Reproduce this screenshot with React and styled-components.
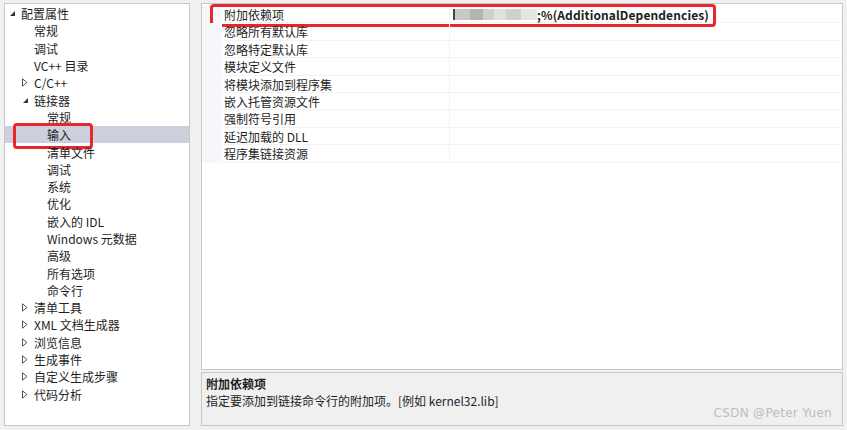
import styled, { createGlobalStyle } from 'styled-components';

const GlobalStyle = createGlobalStyle`
   html, body {
      margin: 0;
      padding: 0;
      background: #f0f0f0;
   }
   body {
      font-family: "Noto Sans CJK SC", "Noto Sans", sans-serif;
      font-size: 12px;
      color: #1e1e1e;
   }
`;

const tree = [
   { label: '配置属性', level: 0, arrow: 'open' },
   { label: '常规', level: 1 },
   { label: '调试', level: 1 },
   { label: 'VC++ 目录', level: 1 },
   { label: 'C/C++', level: 1, arrow: 'closed' },
   { label: '链接器', level: 1, arrow: 'open' },
   { label: '常规', level: 2 },
   { label: '输入', level: 2, selected: true },
   { label: '清单文件', level: 2 },
   { label: '调试', level: 2 },
   { label: '系统', level: 2 },
   { label: '优化', level: 2 },
   { label: '嵌入的 IDL', level: 2 },
   { label: 'Windows 元数据', level: 2 },
   { label: '高级', level: 2 },
   { label: '所有选项', level: 2 },
   { label: '命令行', level: 2 },
   { label: '清单工具', level: 1, arrow: 'closed' },
   { label: 'XML 文档生成器', level: 1, arrow: 'closed' },
   { label: '浏览信息', level: 1, arrow: 'closed' },
   { label: '生成事件', level: 1, arrow: 'closed' },
   { label: '自定义生成步骤', level: 1, arrow: 'closed' },
   { label: '代码分析', level: 1, arrow: 'closed' },
];

const props = [
   '附加依赖项',
   '忽略所有默认库',
   '忽略特定默认库',
   '模块定义文件',
   '将模块添加到程序集',
   '嵌入托管资源文件',
   '强制符号引用',
   '延迟加载的 DLL',
   '程序集链接资源',
];

const Arrow = ({ type }) => (
   type === 'open'
      ? <svg width="7" height="7" viewBox="0 0 7 7"><path d="M6 1 L6 6 L1 6 Z" fill="#333" /></svg>
      : <svg width="6" height="9" viewBox="0 0 6 9"><path d="M0.5 0.8 L5 4.5 L0.5 8.2 Z" fill="none" stroke="#555" strokeWidth="1" /></svg>
);

const App = () => {
   return (
      <>
         <GlobalStyle />
         <Page>
            <TreePanel>
               {
                  tree.map((item, i) => (
                     <TreeRow key={i} $selected={item.selected}>
                        <ArrowSlot $level={item.level}>
                           { item.arrow && <Arrow type={item.arrow} /> }
                        </ArrowSlot>
                        <span>{ item.label }</span>
                        { item.selected && <Highlight /> }
                     </TreeRow>
                  ))
               }
            </TreePanel>
            <RightColumn>
               <Grid>
                  {
                     props.map((name, i) => (
                        <PropRow key={i}>
                           <Gutter />
                           <PropName>{ name }</PropName>
                           <PropValue>
                              {
                                 i === 0 &&
                                 <>
                                    <Blur />
                                    <ValueText>;%(AdditionalDependencies)</ValueText>
                                 </>
                              }
                           </PropValue>
                           { i === 0 && <RowHighlight /> }
                        </PropRow>
                     ))
                  }
                  <GridFill />
               </Grid>
               <Description>
                  <DescTitle>附加依赖项</DescTitle>
                  <DescText>指定要添加到链接命令行的附加项。[例如 kernel32.lib]</DescText>
                  <Watermark>CSDN @Peter Yuen</Watermark>
               </Description>
            </RightColumn>
         </Page>
      </>
   );
};

export default App;

const Page = styled.div`
   display: flex;
   width: 847px;
   height: 430px;
   box-sizing: border-box;
   padding: 3px 4px 4px 4px;
   gap: 11px;
`;

const TreePanel = styled.div`
   width: 186px;
   box-sizing: border-box;
   background: #fff;
   border: 1px solid #c8c8c8;
   padding-top: 1px;
   display: flex;
   flex-direction: column;
`;

const TreeRow = styled.div`
   position: relative;
   display: flex;
   align-items: center;
   height: 17.3px;
   line-height: 17px;
   background: ${p => p.$selected ? '#cdd0dc' : 'transparent'};
   white-space: nowrap;
`;

const ArrowSlot = styled.div`
   display: flex;
   align-items: center;
   justify-content: center;
   width: 10px;
   margin-left: ${p => 2 + p.$level * 13}px;
   margin-right: 4px;
`;

const Highlight = styled.div`
   position: absolute;
   left: 8px;
   top: -3px;
   width: 74px;
   height: 20px;
   border: 3px solid #e8262b;
   border-radius: 4px;
`;

const RightColumn = styled.div`
   flex: 1;
   display: flex;
   flex-direction: column;
   gap: 2px;
`;

const Grid = styled.div`
   flex: 1;
   background: #fff;
   border: 1px solid #c8c8c8;
   display: flex;
   flex-direction: column;
   padding-top: 2px;
`;

const PropRow = styled.div`
   position: relative;
   display: flex;
   height: 17.4px;
   line-height: 17px;
`;

const Gutter = styled.div`
   width: 20px;
   background: #f5f7fb;
`;

const PropName = styled.div`
   width: 228px;
   padding-left: 2px;
   box-sizing: border-box;
   border-bottom: 1px solid #f2f2f2;
   border-right: 1px solid #f2f2f2;
`;

const PropValue = styled.div`
   flex: 1;
   display: flex;
   align-items: center;
   padding-left: 3px;
   border-bottom: 1px solid #f2f2f2;
`;

const Blur = styled.div`
   width: 82px;
   height: 11px;
   border-left: 2px solid #444;
   background: linear-gradient(90deg, #c8c8c8 0 18%, #b4b4b4 18% 34%, #cfcfcf 34% 48%, #e0e0e0 48% 62%, #d0d0d0 62% 80%, #e6e6e6 80% 100%);
`;

const ValueText = styled.span`
   font-weight: 700;
   letter-spacing: 0.1px;
`;

const RowHighlight = styled.div`
   position: absolute;
   left: 8px;
   top: -2px;
   width: 500px;
   height: 17px;
   border: 3px solid #e8262b;
   border-radius: 4px;
`;

const GridFill = styled.div`
   flex: 1;
`;

const Description = styled.div`
   position: relative;
   height: 54px;
   box-sizing: border-box;
   border: 1px solid #c8c8c8;
   background: #f0f0f0;
   padding: 2px 4px;
   line-height: 17px;
`;

const DescTitle = styled.div`
   font-weight: 700;
`;

const DescText = styled.div``;

const Watermark = styled.div`
   position: absolute;
   right: 10px;
   bottom: 3px;
   color: #bdbdbd;
   font-family: "DejaVu Sans", sans-serif;
   font-size: 12px;
   letter-spacing: 0.3px;
`;
